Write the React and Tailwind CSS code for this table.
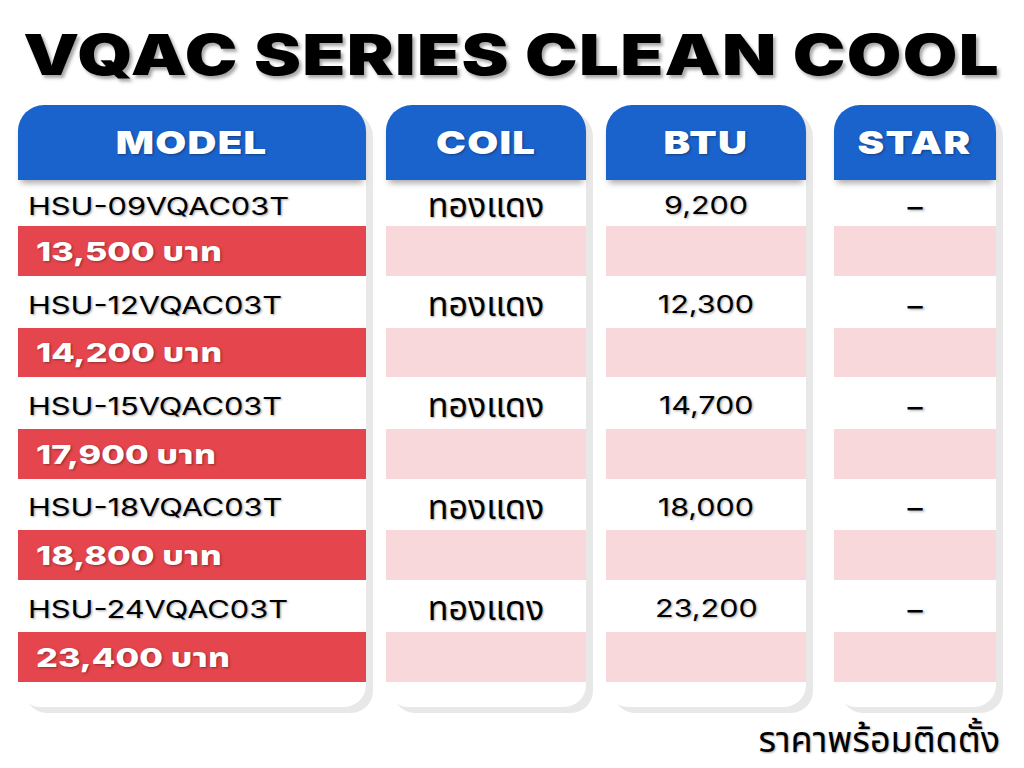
import React from "react";

const rows = [
  { model: "HSU-09VQAC03T", price: "13,500 บาท", btu: "9,200" },
  { model: "HSU-12VQAC03T", price: "14,200 บาท", btu: "12,300" },
  { model: "HSU-15VQAC03T", price: "17,900 บาท", btu: "14,700" },
  { model: "HSU-18VQAC03T", price: "18,800 บาท", btu: "18,000" },
  { model: "HSU-24VQAC03T", price: "23,400 บาท", btu: "23,200" },
];

const whiteH = ["h-[46px]", "h-[52px]", "h-[52px]", "h-[51px]", "h-[52px]"];
const redH = ["h-[50px]", "h-[49px]", "h-[50px]", "h-[50px]", "h-[50px]"];

const font = "font-['Inter','Noto_Sans','Noto_Sans_Thai',sans-serif]";
const tshadow = "[text-shadow:1px_1px_2px_rgba(0,0,0,0.35)]";

function Card({ title, width, children }) {
  return (
    <div
      className={`${width} flex flex-col bg-white rounded-t-[26px] rounded-b-[22px] shadow-[7px_6px_0_#e8e8e8] h-[602px]`}
    >
      <div className="relative z-10 h-[75px] bg-[#1a62cc] rounded-t-[26px] flex items-center justify-center shadow-[0_6px_6px_-3px_rgba(0,0,0,0.35)]">
        <span
          className={`${font} text-white font-black text-[32px] tracking-[1px] [text-shadow:1px_1px_2px_rgba(0,0,0,0.35)] scale-x-[1.25]`}
        >
          {title}
        </span>
      </div>
      {children}
    </div>
  );
}

export default function App() {
  return (
    <div className="w-[1024px] h-[768px] bg-white overflow-hidden flex flex-col">
      <div className="h-[105px] flex items-start justify-center pt-[23px]">
        <h1
          className={`${font} font-black text-black text-[56px] leading-[64px] tracking-[1px] scale-x-[1.26] [text-shadow:2px_3px_3px_rgba(0,0,0,0.35)]`}
        >
          VQAC SERIES CLEAN COOL
        </h1>
      </div>
      <div className="flex pl-[18px]">
        <Card title="MODEL" width="w-[348px]">
          {rows.map((r, i) => (
            <React.Fragment key={i}>
              <div className={`${whiteH[i]} flex items-center pl-[10px] pt-[7px]`}>
                <span
                  className={`${font} text-[24px] text-black ${tshadow} origin-left scale-x-[1.28] whitespace-nowrap`}
                >
                  {r.model}
                </span>
              </div>
              <div className={`${redH[i]} bg-[#e5454c] flex items-center pl-[18px]`}>
                <span
                  className={`${font} text-[26px] font-extrabold text-white ${tshadow} origin-left scale-x-[1.32] whitespace-nowrap`}
                >
                  {r.price}
                </span>
              </div>
            </React.Fragment>
          ))}
        </Card>
        <div className="w-[20px]" />
        <Card title="COIL" width="w-[200px]">
          {rows.map((r, i) => (
            <React.Fragment key={i}>
              <div className={`${whiteH[i]} flex items-center justify-center pt-[4px]`}>
                <span className={`${font} text-[34px] leading-[40px] text-black ${tshadow}`}>ทองแดง</span>
              </div>
              <div className={`${redH[i]} bg-[#f8d8da]`} />
            </React.Fragment>
          ))}
        </Card>
        <div className="w-[20px]" />
        <Card title="BTU" width="w-[200px]">
          {rows.map((r, i) => (
            <React.Fragment key={i}>
              <div className={`${whiteH[i]} flex items-center justify-center pt-[6px]`}>
                <span className={`${font} text-[24px] text-black ${tshadow} scale-x-[1.27]`}>
                  {r.btu}
                </span>
              </div>
              <div className={`${redH[i]} bg-[#f8d8da]`} />
            </React.Fragment>
          ))}
        </Card>
        <div className="w-[28px]" />
        <Card title="STAR" width="w-[162px]">
          {rows.map((r, i) => (
            <React.Fragment key={i}>
              <div className={`${whiteH[i]} flex items-center justify-center pt-[6px]`}>
                <span className={`${font} text-[26px] font-medium text-black ${tshadow} scale-x-[1.8]`}>-</span>
              </div>
              <div className={`${redH[i]} bg-[#f8d8da]`} />
            </React.Fragment>
          ))}
        </Card>
      </div>
      <div className="flex justify-end pr-[24px] pt-[10px]">
        <span className={`${font} text-[36px] leading-[44px] text-black ${tshadow}`}>ราคาพร้อมติดตั้ง</span>
      </div>
    </div>
  );
}
